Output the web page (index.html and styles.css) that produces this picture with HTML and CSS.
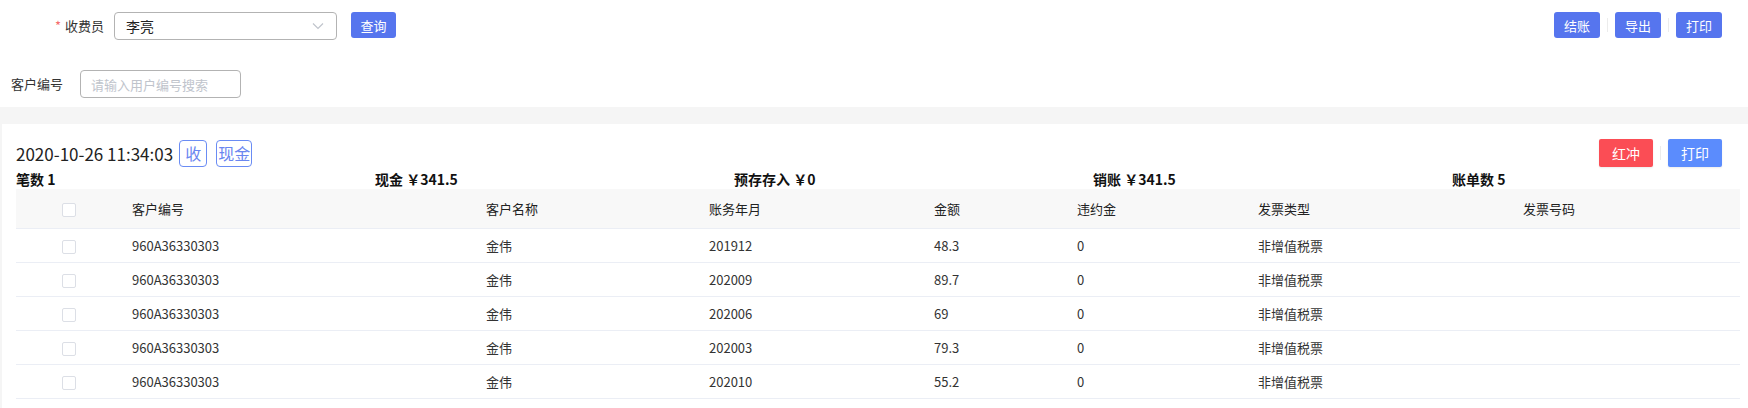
FILE: index.html
```html
<!DOCTYPE html>
<html lang="zh-CN">
<head>
    <meta charset="UTF-8">
    <meta name="viewport" content="width=device-width, initial-scale=1.0">
    <title>收费结账</title>
    <link rel="stylesheet" href="styles.css">
</head>
<body>
    <div class="filter-card">
        <div class="filter-row">
            <label class="form-label required">收费员</label>
            <div class="select">
                <span>李亮</span>
                <svg class="select-arrow" width="12" height="8" viewBox="0 0 12 8"><path d="M1 1.5l5 5 5-5" fill="none" stroke="#c0c4cc" stroke-width="1.2"/></svg>
            </div>
            <button class="btn btn-primary">查询</button>
            <div class="toolbar">
                <button class="btn btn-primary">结账</button>
                <span class="divider"></span>
                <button class="btn btn-primary">导出</button>
                <span class="divider"></span>
                <button class="btn btn-primary">打印</button>
            </div>
        </div>
        <div class="filter-row">
            <label class="form-label">客户编号</label>
            <input type="text" class="text-input" placeholder="请输入用户编号搜索">
        </div>
    </div>

    <div class="bill-card">
        <div class="bill-head">
            <div class="bill-title">
                <span class="bill-time">2020-10-26 11:34:03</span>
                <span class="tag">收</span>
                <span class="tag">现金</span>
            </div>
            <div class="bill-actions">
                <button class="btn btn-large btn-danger">红冲</button>
                <span class="divider"></span>
                <button class="btn btn-large btn-info">打印</button>
            </div>
        </div>
        <div class="bill-stats">
            <span>笔数 1</span>
            <span>现金 ￥341.5</span>
            <span>预存存入 ￥0</span>
            <span>销账 ￥341.5</span>
            <span>账单数 5</span>
        </div>
        <table class="bill-table">
            <colgroup>
                <col style="width:106px">
                <col style="width:354px">
                <col style="width:223px">
                <col style="width:225px">
                <col style="width:143px">
                <col style="width:181px">
                <col style="width:265px">
                <col>
            </colgroup>
            <thead>
                <tr>
                    <th class="col-check"><span class="checkbox"></span></th>
                    <th>客户编号</th>
                    <th>客户名称</th>
                    <th>账务年月</th>
                    <th>金额</th>
                    <th>违约金</th>
                    <th>发票类型</th>
                    <th>发票号码</th>
                </tr>
            </thead>
            <tbody>
                <tr>
                    <td class="col-check"><span class="checkbox"></span></td>
                    <td>960A36330303</td><td>金伟</td><td>201912</td><td>48.3</td><td>0</td><td>非增值税票</td><td></td>
                </tr>
                <tr>
                    <td class="col-check"><span class="checkbox"></span></td>
                    <td>960A36330303</td><td>金伟</td><td>202009</td><td>89.7</td><td>0</td><td>非增值税票</td><td></td>
                </tr>
                <tr>
                    <td class="col-check"><span class="checkbox"></span></td>
                    <td>960A36330303</td><td>金伟</td><td>202006</td><td>69</td><td>0</td><td>非增值税票</td><td></td>
                </tr>
                <tr>
                    <td class="col-check"><span class="checkbox"></span></td>
                    <td>960A36330303</td><td>金伟</td><td>202003</td><td>79.3</td><td>0</td><td>非增值税票</td><td></td>
                </tr>
                <tr>
                    <td class="col-check"><span class="checkbox"></span></td>
                    <td>960A36330303</td><td>金伟</td><td>202010</td><td>55.2</td><td>0</td><td>非增值税票</td><td></td>
                </tr>
            </tbody>
        </table>
    </div>
</body>
</html>
```

FILE: styles.css
```css
body {
    margin: 0;
    background-color: #f5f5f5;
    font-family: "Noto Sans CJK SC", "Noto Sans", sans-serif;
    font-size: 13px;
    color: #333;
}
button {
    font-family: inherit;
}

/* 顶部筛选区 */
.filter-card {
    background: white;
    padding: 12px 26px 9px 0;
    margin-bottom: 17px;
}
.filter-row {
    display: flex;
    align-items: flex-start;
}
.filter-row + .filter-row {
    margin-top: 30px;
    padding-left: 11px;
}
.form-label {
    height: 28px;
    line-height: 28px;
    color: #333;
}
.filter-row:first-child .form-label {
    width: 104px;
    text-align: right;
    margin-right: 10px;
}
.filter-row + .filter-row .form-label {
    margin-right: 17px;
}
.required::before {
    content: "*";
    color: #f56c6c;
    margin-right: 4px;
}
.select {
    box-sizing: border-box;
    width: 223px;
    height: 28px;
    border: 1px solid #b3b3b3;
    border-radius: 4px;
    display: flex;
    align-items: center;
    justify-content: space-between;
    padding: 0 12px 0 11px;
    font-size: 14px;
    color: #222;
    margin-right: 14px;
}
.text-input {
    box-sizing: border-box;
    width: 161px;
    height: 28px;
    border: 1px solid #b3b3b3;
    border-radius: 4px;
    padding: 0 10px;
    font-family: inherit;
    font-size: 13px;
    outline: none;
}
.text-input::placeholder {
    color: #c0c4cc;
}

.btn {
    height: 26px;
    padding: 0 8px;
    border: none;
    border-radius: 3px;
    color: white;
    font-size: 13px;
    cursor: pointer;
    min-width: 45px;
}
.btn-primary {
    background-color: #5675ee;
}
.btn-large {
    height: 28px;
    min-width: 54px;
    border-radius: 2px;
    font-size: 14px;
    box-shadow: 0 1px 2px rgba(0,0,0,0.08);
}
.btn-danger {
    background-color: #fb4d55;
}
.btn-info {
    background-color: #5b8cfd;
}
.toolbar,
.bill-actions {
    margin-left: auto;
    display: flex;
    align-items: center;
}
.divider {
    width: 1px;
    height: 14px;
    background: #ececec;
    margin: 0 7px;
}
.toolbar .btn {
    min-width: 46px;
}

/* 账单卡片 */
.bill-card {
    background: white;
    margin-left: 2px;
    padding: 15px 8px 10px 14px;
}
.bill-head {
    display: flex;
    align-items: center;
    height: 28px;
}
.bill-actions {
    margin-right: 18px;
}
.bill-title {
    display: flex;
    align-items: center;
}
.bill-time {
    font-size: 17px;
    color: #222;
    margin-right: 6px;
}
.tag {
    box-sizing: border-box;
    min-width: 28px;
    height: 27px;
    line-height: 25px;
    padding: 0 1px;
    border: 1px solid #6a8cf4;
    border-radius: 4px;
    color: #6a86f0;
    font-size: 16px;
    text-align: center;
    margin-right: 9px;
}
.bill-stats {
    display: grid;
    grid-template-columns: repeat(4, 359px) 1fr;
    margin-top: 3px;
    height: 18px;
    line-height: 18px;
    font-size: 14px;
    font-weight: bold;
    color: #111;
}

.bill-table {
    width: 100%;
    margin-top: 1px;
    border-collapse: collapse;
    table-layout: fixed;
}
.bill-table th,
.bill-table td {
    text-align: left;
    padding: 0 10px;
    border-bottom: 1px solid #ebeef5;
    font-weight: normal;
    white-space: nowrap;
}
.bill-table th {
    height: 39px;
    background-color: #f8f8f8;
    color: #222;
}
.bill-table td {
    height: 33px;
    color: #333;
}
.bill-table .col-check {
    text-align: center;
    padding: 0;
}
.checkbox {
    display: inline-block;
    box-sizing: border-box;
    width: 14px;
    height: 14px;
    border: 1px solid #dcdfe6;
    border-radius: 2px;
    background: white;
    vertical-align: middle;
}
```
